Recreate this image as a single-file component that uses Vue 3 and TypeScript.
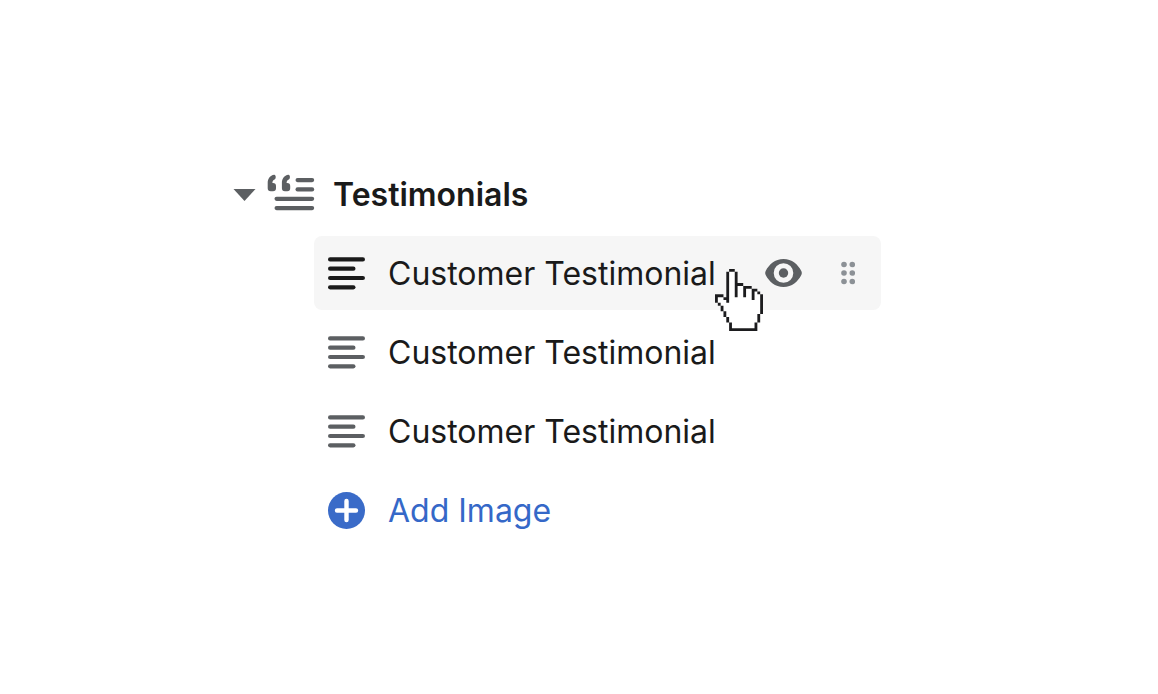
<script setup lang="ts">
import { ref } from 'vue'

interface Block {
  id: number
  label: string
  active: boolean
}

const open = ref(true)
const blocks = ref<Block[]>([
  { id: 1, label: 'Customer Testimonial', active: true },
  { id: 2, label: 'Customer Testimonial', active: false },
  { id: 3, label: 'Customer Testimonial', active: false },
])

function addBlock(): void {
  blocks.value.push({ id: blocks.value.length + 1, label: 'Customer Testimonial', active: false })
}

// Pixel map of the hand pointer: # is outline, o is fill.
const hand: string[] = [
  '     ##',
  '    #oo#',
  '    #oo#',
  '    #oo#',
  '    #oo#',
  '    #oo###',
  '    #oo#oo###',
  '    #oo#oo#oo##',
  '    #oo#oo#oo#o#',
  '### #oo#oo#oo#oo#',
  '#oo##oooooooo#oo#',
  '#ooo#ooooooooooo#',
  ' #oooooooooooooo#',
  '  #ooooooooooooo#',
  '  #ooooooooooooo#',
  '   #oooooooooooo#',
  '   #ooooooooooo#',
  '    #oooooooooo#',
  '    #oooooooooo#',
  '     #oooooooo#',
  '     #oooooooo#',
  '     ##########',
]

function cells(chars: string): string {
  return hand
    .flatMap((row, y) => [...row].map((c, x) => (chars.includes(c) ? `M${x} ${y}h1v1h-1z` : '')))
    .join('')
}
const handFill = cells('#o')
const handOutline = cells('#')
</script>

<template>
  <main class="panel">
    <div class="row header">
      <button class="toggle" type="button" aria-label="Toggle Testimonials" :aria-expanded="open" @click="open = !open">
        <svg width="23" height="12" viewBox="0 0 23 12"><path d="M0.5 0h22L11.5 12z" /></svg>
      </button>
      <svg class="quote" width="48" height="40" viewBox="0 0 48 40" aria-hidden="true">
        <path d="M7.2 .7C3 1.4 .7 4.500 .7 9v5.300a3 3 0 0 0 3 3h2.300a3 3 0 0 0 3-3v-2.300a3 3 0 0 0-3-3h-.6c0-1.800 .8-3 2.200-3.500C9.300 4.600 9 .5 7.200 .7z" />
        <path transform="translate(14.2 0)" d="M7.2 .7C3 1.4 .7 4.500 .7 9v5.300a3 3 0 0 0 3 3h2.300a3 3 0 0 0 3-3v-2.300a3 3 0 0 0-3-3h-.6c0-1.800 .8-3 2.200-3.500C9.300 4.600 9 .5 7.200 .7z" />
        <rect x="28.5" y="4" width="18.7" height="4.2" rx="2.1" />
        <rect x="28.5" y="13.3" width="18.7" height="4.2" rx="2.1" />
        <rect x="7.5" y="22.7" width="39.7" height="4.2" rx="2.1" />
        <rect x="7.5" y="32" width="39.7" height="4.2" rx="2.1" />
      </svg>
      <h1 class="title">Testimonials</h1>
    </div>

    <ul v-if="open" class="list">
      <li v-for="block in blocks" :key="block.id" class="row item" :class="{ active: block.active }">
        <svg class="lines" width="37" height="33" viewBox="0 0 37 33" aria-hidden="true">
          <rect y="0.3" width="37" height="4.2" rx="2.1" />
          <rect y="9.6" width="27.5" height="4.2" rx="2.1" />
          <rect y="18.9" width="37" height="4.2" rx="2.1" />
          <rect y="28.2" width="27.5" height="4.2" rx="2.1" />
        </svg>
        <span class="label">{{ block.label }}</span>
        <div v-if="block.active" class="actions">
          <button class="tool eye" type="button" aria-label="Hide block">
            <svg width="37" height="28" viewBox="0 0 37 28">
              <path fill-rule="evenodd" d="M18.5 0C27 0 33 5.5 36.3 12Q37.3 14 36.3 16C33 22.5 27 28 18.5 28S4 22.5 .7 16Q-.3 14 .7 12C4 5.5 10 0 18.5 0zM18.5 4.200a9.800 9.800 0 1 0 0 19.600 9.800 9.800 0 0 0 0-19.600z" />
              <circle cx="18.5" cy="14" r="4.7" />
            </svg>
          </button>
          <button class="tool grip" type="button" aria-label="Drag to reorder">
            <svg width="14" height="24" viewBox="0 0 14 24">
              <circle cx="3" cy="3.5" r="2.8" /><circle cx="11.3" cy="3.5" r="2.8" />
              <circle cx="3" cy="12" r="2.8" /><circle cx="11.3" cy="12" r="2.8" />
              <circle cx="3" cy="20.5" r="2.8" /><circle cx="11.3" cy="20.5" r="2.8" />
            </svg>
          </button>
        </div>
        <svg v-if="block.active" class="pointer" width="48" height="62" viewBox="0 0 17 22" preserveAspectRatio="none" aria-hidden="true">
          <path fill="#fff" :d="handFill" />
          <path fill="#1c1c1e" :d="handOutline" />
        </svg>
      </li>
      <li>
        <button class="row item add" type="button" @click="addBlock">
          <svg class="plus" width="37" height="37" viewBox="0 0 37 37" aria-hidden="true">
            <circle cx="18.5" cy="18.5" r="18.5" fill="#3a6bc8" />
            <path d="M18.5 9v19M9 18.5h19" stroke="#fff" stroke-width="4.4" stroke-linecap="round" />
          </svg>
          <span class="label">Add Image</span>
        </button>
      </li>
    </ul>
  </main>
</template>

<style>
body {
  background: #fff;
}
</style>

<style scoped>
.panel {
  padding: 157px 277px 40px 233px;
  font-family: Inter, "Liberation Sans", sans-serif;
  font-size: 32px;
  line-height: 40px;
  color: #1a1a1a;
}
svg {
  display: block;
  flex: none;
}
button {
  border: 0;
  padding: 0;
  background: none;
  font: inherit;
  cursor: pointer;
}
.row {
  display: flex;
  align-items: center;
  min-height: 74px;
  box-sizing: border-box;
}
.toggle,
.quote {
  fill: #5c5f62;
}
.toggle,
.title,
.label {
  padding-top: 2px;
}
.quote {
  margin: 0 18px 0 11px;
}
.title {
  margin: 0;
  font-size: 32px;
  font-weight: 600;
}
.list {
  display: flex;
  flex-direction: column;
  gap: 5px;
  margin: 5px 0 0 81px;
  padding: 0;
  list-style: none;
}
.item {
  position: relative;
  gap: 23px;
  padding: 0 14px;
  border-radius: 8px;
}
.active {
  background: #f6f6f6;
}
.lines {
  fill: #5c5f62;
}
.active .lines {
  fill: #1a1a1a;
}
.label {
  white-space: nowrap;
}
.actions {
  display: flex;
  align-items: center;
  gap: 39px;
  margin-left: auto;
  padding-right: 12px;
}
.eye {
  fill: #5c5f62;
}
.grip {
  fill: #8c9196;
}
.pointer {
  position: absolute;
  left: 401px;
  top: 33px;
  z-index: 1;
  pointer-events: none;
}
.add {
  width: 100%;
  color: #3568c8;
  text-align: left;
}
</style>
